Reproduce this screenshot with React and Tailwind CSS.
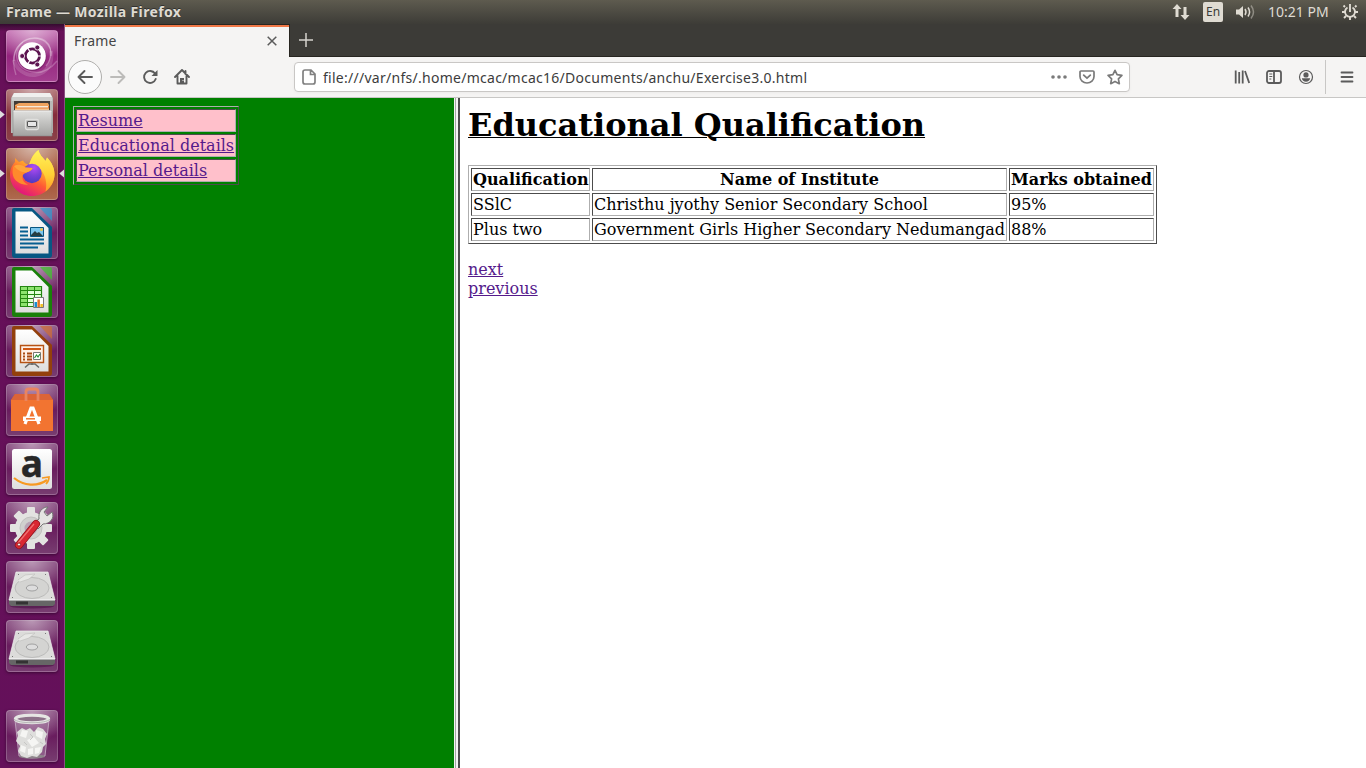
import React from 'react';

const UI = "font-['Noto_Sans','Open_Sans',sans-serif]";

function Tile({ bg, children, label, left, right }) {
  return (
    <div className="relative ml-[6px] h-[52px] w-[52px] shrink-0" aria-label={label}>
      <div className={`h-[52px] w-[52px] rounded-[4px] border border-white/20 bg-linear-to-b shadow-[0_1px_3px_rgba(20,0,20,0.5)] ${bg}`}>
        <svg className="-ml-px -mt-px block h-[52px] w-[52px] overflow-visible" viewBox="0 0 52 52">
          <defs>
            <radialGradient id="shine" cx="50%" cy="0%" r="65%">
              <stop offset="0" stopColor="#fff" stopOpacity=".45" />
              <stop offset="1" stopColor="#fff" stopOpacity="0" />
            </radialGradient>
            <linearGradient id="metal" x1="0" y1="0" x2="0" y2="1">
              <stop offset="0" stopColor="#e0e0de" />
              <stop offset="1" stopColor="#a2a2a0" />
            </linearGradient>
            <linearGradient id="paper" x1="0" y1="0" x2="0" y2="1">
              <stop offset="0" stopColor="#fff" />
              <stop offset="1" stopColor="#dedede" />
            </linearGradient>
          </defs>
          <rect width="52" height="52" rx="4" fill="url(#shine)" />
          {children}
        </svg>
      </div>
      {left && (
        <svg className="absolute -left-[6px] top-[20px] h-[11px] w-[5px]" viewBox="0 0 5 11"><path d="M0 1.5 4.7 5.5 0 9.5Z" fill="#dedede" /></svg>
      )}
      {right && (
        <svg className="absolute left-[53px] top-[20px] h-[11px] w-[5px]" viewBox="0 0 5 11"><path d="M5 1.5 .3 5.5 5 9.5Z" fill="#dedede" /></svg>
      )}
    </div>
  );
}

function Dash() {
  return (
    <>
      <g fill="none" stroke="#fff">
        <path d="M10 45C5 29 7 15 23 9c14-3 23 6 22 17" strokeOpacity=".25" strokeWidth="1.3" />
        <path d="M8 31C8 17 17 7 31 8s18 17 9 28" strokeOpacity=".28" strokeWidth="1.3" />
        <path d="M51 31c-9 11-20 14-31 9C8 34 8 20 17 12" strokeOpacity=".24" strokeWidth="1.3" />
        <path d="M45 21c2 13-4 22-16 24-10 1-19-6-21-15" strokeOpacity=".15" strokeWidth="4" />
      </g>
      <circle cx="26.5" cy="27" r="14" fill="#53134a" opacity=".35" />
      <circle cx="26" cy="26" r="13.8" fill="#fff" />
      <circle cx="26.4" cy="26" r="7.1" fill="none" stroke="#5c1450" strokeWidth="2.8" />
      <g stroke="#fff" strokeWidth="1.2" strokeLinecap="round"><path d="m26.4 26 9 0M26.4 26l-4.6-8M26.4 26l-4.6 8" /></g>
      <circle cx="26.4" cy="26" r="5" fill="#fff" />
      <g fill="#5c1450" stroke="#fff" strokeWidth=".8"><circle cx="16.2" cy="26" r="2.5" /><circle cx="31.3" cy="17.5" r="2.5" /><circle cx="31.3" cy="34.5" r="2.5" /></g>
    </>
  );
}

function Files() {
  return (
    <>
      <path d="M8 4h36l3 5v35H5V9Z" fill="#b9b9b7" />
      <path d="M8 4h36l2 4H6Z" fill="#f0f0ee" />
      <path d="M6 8h40v4H6Z" fill="#cfcfcd" />
      <path d="M8 12h36v10H8Z" fill="#423b37" />
      <path d="M9 16l4-2h29l1 2v6H9Z" fill="#f0a25d" />
      <path d="M9 17h34v5H9Z" fill="#e97f34" />
      <path d="M11 17h31v1.5H11Z" fill="#f7ead9" />
      <path d="M9 19.5h34V21H9Z" fill="#f5c590" />
      <path d="M7 21.5h39v25.5H7Z" fill="url(#metal)" stroke="#8b8b89" strokeWidth=".6" />
      <path d="M7.5 22h38" stroke="#f0f0f0" />
      <rect x="19.5" y="30.5" width="13" height="10" rx="1.7" fill="#b8b8b6" stroke="#e0e0de" strokeWidth="1.3" />
      <rect x="21.5" y="32.5" width="9" height="5" rx=".5" fill="#e7e7e7" stroke="#555" />
    </>
  );
}

function Firefox() {
  return (
    <>
      <defs>
        <linearGradient id="flame" x1=".8" y1=".05" x2=".3" y2=".95">
          <stop stopColor="#fff04c" /><stop offset=".36" stopColor="#ffb52a" /><stop offset=".66" stopColor="#ff5a34" /><stop offset="1" stopColor="#e3197a" />
        </linearGradient>
        <linearGradient id="tail" x1=".5" y1="0" x2=".5" y2="1">
          <stop stopColor="#fff35a" /><stop offset=".6" stopColor="#ffcf35" /><stop offset="1" stopColor="#ff9a2a" />
        </linearGradient>
        <radialGradient id="globe" cx=".6" cy=".2" r=".8"><stop stopColor="#b34cf5" /><stop offset=".5" stopColor="#7a40d8" /><stop offset="1" stopColor="#4d3ac0" /></radialGradient>
      </defs>
      <path d="M32.500 2c1 5 4 7 7 11l1.500-3.500c5 5 7.500 11 7.500 17C48 39 38 48 26 48S4 39 4 27c0-6 2-9.500 5-13V10l4 4 4-1.500c1 2.500 3 3.500 6 4.500 2-6 4-11 9.500-15Z" fill="url(#flame)" />
      <path d="M32.500 2c1 5 4 7 7 11l1.500-3.500c5 5 7.500 11 7.500 17 0 7-4 13-9 17 2-8 0-16-4-21-4-4-9-6-12.500-5.500 2-6 4-11 9.500-15Z" fill="url(#tail)" />
      <circle cx="26" cy="25.500" r="9.700" fill="url(#globe)" />
      <path d="M7 19c4-3 8-2.500 12 .5l7.500.5c-.5 2.500-3.500 3.500-6 4.500-1.500 1-4 1.500-4 4-.5 4 2.500 7 6 8-7 1-14-3-15.500-9-.7-3-.5-6 0-8.500Z" fill="#ff8a2c" />
      <path d="M8 18c4-2 8-1.500 11.500 1.500l7 .5c-.5 2-3.500 3.500-6 4.500-4 0-9-2-12.500-6.500Z" fill="#ffa63a" />
    </>
  );
}

function Office({ color, light, kind }) {
  return (
    <>
      <path d="M6 3Q6 1 8 1h18l20 19v28q0 3-3 3H9q-3 0-3-3Z" fill={color} />
      <path d="M9.500 4.500H26L42.500 21v25.500h-33Z" fill="url(#paper)" />
      <path d="M34 1h10q2 0 2 2v11Z" fill={light} opacity=".7" />
      {kind === 'writer' && (
        <>
          <path d="M14 20.500h8M14 24.500h8M14 28.500h8M14 32.500h24M14 36.500h24M14 40.500h18" stroke="#075f91" strokeWidth="2" />
          <path d="M24.500 20.500h13v9h-13Z" fill="#7cc6ed" stroke="#075580" />
          <path d="m25 28 4-4 2 2 2-1 4 4H25Z" fill="#263d42" /><circle cx="35.500" cy="22.500" r="1.500" fill="#e8c64e" />
        </>
      )}
      {kind === 'calc' && (
        <>
          <path d="M14.500 20.500h21v20h-21Z" fill="#e3ffd9" stroke="#248611" strokeWidth="1.2" />
          <path d="M15 21h20v3H15ZM15 25h6v15h-6Z" fill="#8de36e" />
          <path d="M14 24.500h21M14 28.500h21M14 32.500h21M14 36.500h21M21.500 21v20M28.500 21v20" stroke="#248611" />
          <path d="M27.500 31.500h10v10h-10Z" fill="#fff" stroke="#777" />
          <path d="M28.500 36h2.500v5h-2.500Z" fill="#168ed0" /><path d="M31.400 33.500h2.500V41h-2.500Z" fill="#e66f23" /><path d="M34.400 38h2.500v3h-2.500Z" fill="#f1bd20" />
        </>
      )}
      {kind === 'impress' && (
        <>
          <path d="M14.500 20.500h23v17h-23Z" fill="#fff0e6" stroke="#b65315" strokeWidth="1.4" />
          <path d="M17 24h18" stroke="#cf5815" strokeWidth="2" />
          <path d="M17 28.500h2m2 0h5M17 31.500h2m2 0h5M17 34.500h2m2 0h5" stroke="#a84b13" strokeWidth="1.8" />
          <path d="M27.500 27.500h7v7h-7Z" fill="#fff" stroke="#777" /><path d="m28.500 33 2-3 1.500 2 2-3" stroke="#279239" fill="none" strokeWidth="1.2" />
          <path d="M26 38v2M19 42.500l4-3.500h6l4 3.500" fill="none" stroke="#696969" strokeWidth="1.5" />
        </>
      )}
    </>
  );
}

function Software() {
  return (
    <>
      <path d="M9 10h34l4 6v31H5V16Z" fill="#df5a1d" />
      <path d="M5 16h42v31H5Z" fill="#f27431" />
      <path d="M9 10 5 16h42l-4-6Z" fill="#dc6437" />
      <path d="M20 17V8q0-3 3-3h6q3 0 3 3v9" fill="none" stroke="#e98460" strokeWidth="2.8" />
      <path d="m19 40 6-16h2l6 16" fill="none" stroke="#fff" strokeWidth="3.2" />
      <path d="M17 32.500h18v4.500H17Z" fill="#fff" /><path d="M20 34.800h9" stroke="#f27431" strokeWidth="1.5" />
    </>
  );
}

function Settings() {
  return (
    <>
      <g transform="translate(25 26)">
        <g fill="#e3e3e1">
          <circle r="16" />
          <rect x="-4" y="-21" width="8" height="42" rx="1" />
          <rect x="-4" y="-21" width="8" height="42" rx="1" transform="rotate(45)" />
          <rect x="-4" y="-21" width="8" height="42" rx="1" transform="rotate(90)" />
          <rect x="-4" y="-21" width="8" height="42" rx="1" transform="rotate(135)" />
        </g>
        <circle r="11" fill="#d0d0ce" stroke="#c1c1bf" /><circle r="6.500" fill="#b9a3b5" />
      </g>
      <path d="m29 20 4-3c-1-7 3-12 9-12l-4 5 3 4 5-4c3 6-2 12-9 12l-5 5Z" fill="#e4e4e2" stroke="#777" />
      <path d="M30 22 13 43" stroke="#8e1019" strokeWidth="8" strokeLinecap="round" />
      <path d="M30 22 13 43" stroke="#d92832" strokeWidth="6.600" strokeLinecap="round" />
      <path d="M28 22 12 41" stroke="#f17373" strokeWidth="1.200" />
      <circle cx="13" cy="42.500" r="1.600" fill="#eee" stroke="#9e1e23" />
    </>
  );
}

function Disk() {
  return (
    <>
      <ellipse cx="26" cy="45" rx="22" ry="2.500" fill="#35002f" opacity=".4" />
      <path d="M10 11h32l7 28H3Z" fill="#dcdcda" stroke="#f1f1f1" strokeWidth=".7" />
      <path d="M3 39h46v4l-2 2H5l-2-2Z" fill="#666" /><path d="M3 39h46" stroke="#f6f6f6" strokeWidth="1.200" />
      <path d="M10 40.500h12v3H10Z" fill="#333" />
      <ellipse cx="26" cy="27" rx="17" ry="10.500" fill="#d4d4d2" stroke="#b4b4b2" strokeWidth=".8" />
      <ellipse cx="26" cy="27" rx="5.700" ry="3" fill="#ddd" stroke="#a1a1a1" />
      <path d="m12 19 7-5 10-1-6 5-9 3" fill="#e7e7e5" stroke="#c1c1bf" strokeWidth=".7" />
      <path d="M6 36.500h1m38 0h1M12 13.500h1m26 0h1" stroke="#777" />
    </>
  );
}

function Trash() {
  return (
    <>
      <path d="M9 10h34l-4 36q-13 4-26 0Z" fill="#b596b3" fillOpacity=".4" stroke="#c9b2c8" strokeWidth=".8" />
      <ellipse cx="26" cy="46.500" rx="13" ry="2" fill="#8e858b" />
      <path d="m11 22 5-4 4 2 4-2 4 4 4-5 5 2 4 5-2 5 1 5-3 3-1 5-5 5-5-1-5 2-6-2-3-5 2-5-4-5 2-5Z" fill="#dededc" />
      <g fill="#f5f5f3"><path d="m16 20 6 1-2 7-6-2ZM30 20l7 2-1 7-6-3ZM21 30l7-3 5 6-7 4ZM15 35l5 2-1 6-5-2ZM29 38l6-1-2 6-4 1ZM22 39l5-1v6l-5 1Z" /></g>
      <path d="m24 24 3 3-3 3M18 32l3 3M34 32l3 2" fill="none" stroke="#c6c6c4" strokeWidth="1" />
      <ellipse cx="26" cy="9" rx="16.700" ry="3.700" fill="#8d7189" stroke="#e6e6e4" strokeWidth="3" />
      <path d="M8 9c3 5 33 5 36 0" fill="none" stroke="#aaa" strokeWidth=".8" />
    </>
  );
}

const PLUM = 'from-[#82447a] via-[#691c5e] to-[#773c70]';

function Launcher() {
  return (
    <aside className="flex w-[65px] shrink-0 flex-col gap-[7px] border-r border-[#885080] bg-linear-to-b from-[#350b30] via-[#671058] via-[1%] to-[#64105a] pt-[6px]">
      <Tile label="Search" bg="from-[#c36bb1] via-[#94247e] to-[#a33e8f]"><Dash /></Tile>
      <Tile label="Files" bg="from-[#a66365] via-[#852c3c] to-[#8b4148]" left><Files /></Tile>
      <Tile label="Firefox" bg="from-[#b2765c] via-[#a34d2f] to-[#ae694e]" left right><Firefox /></Tile>
      <Tile label="Writer" bg={PLUM}><Office kind="writer" color="#075783" light="#2e9bd0" /></Tile>
      <Tile label="Calc" bg={PLUM}><Office kind="calc" color="#198009" light="#3cc72b" /></Tile>
      <Tile label="Impress" bg={PLUM}><Office kind="impress" color="#93400c" light="#ce6e32" /></Tile>
      <Tile label="Software" bg={PLUM}><Software /></Tile>
      <Tile label="Amazon" bg={PLUM}>
        <rect x="6" y="6" width="40" height="40" rx="2.500" fill="url(#paper)" />
        <text x="26" y="34" textAnchor="middle" fontFamily="Open Sans, sans-serif" fontWeight="700" fontSize="37" fill="#272727" stroke="#272727" strokeWidth=".5">a</text>
        <path d="M8 35c10 8 23 9 33 2" fill="none" stroke="#f79a22" strokeWidth="2.200" /><path d="m36 35 7-1c0 3-1 5-3 7" fill="none" stroke="#f79a22" strokeWidth="1.700" />
      </Tile>
      <Tile label="Settings" bg={PLUM}><Settings /></Tile>
      <Tile label="Disk" bg={PLUM}><Disk /></Tile>
      <Tile label="Disk" bg={PLUM}><Disk /></Tile>
      <div className="mt-auto pb-[6px]"><Tile label="Trash" bg={PLUM}><Trash /></Tile></div>
    </aside>
  );
}

function Panel() {
  return (
    <header className={`flex h-6 items-center justify-between bg-linear-to-b from-[#5e5b4f] to-[#3d3c37] pl-[6px] pr-[8px] text-[#dfdbd2] ${UI}`}>
      <h1 className="text-[14px] leading-6 font-bold tracking-[0.37px] whitespace-nowrap [text-shadow:0_-1px_#303030]">Frame — Mozilla Firefox</h1>
      <div className="flex h-6 items-center">
        <svg className="h-[16px] w-[18px]" viewBox="0 0 18 16"><path d="M5 0 9.500 5h-3v8h-3V5h-3ZM13 16l4.500-5h-3V3h-3v8h-3Z" fill="#dfdbd2" /></svg>
        <div className="ml-[13px] flex h-[20px] w-[20px] items-center justify-center rounded-[2px] bg-[#dfdbd2] text-[12px] leading-5 text-[#3c3b37]">En</div>
        <svg className="ml-[12px] h-[16px] w-[21px]" viewBox="0 0 21 16"><path d="M1 5.500h3L8 2v12l-4-3.500H1Z" fill="#dfdbd2" /><g fill="none" stroke="#dfdbd2" strokeWidth="1.500"><path d="M10 5q2 3 0 6M13 3.500q3.200 4.500 0 9" /><path d="M16 1.500q5 6.500 0 13" opacity=".45" /></g></svg>
        <span className="ml-[12px] w-[62px] text-[14px] leading-6 whitespace-nowrap">10:21 PM</span>
        <svg className="ml-[12px] h-[16px] w-[16px]" viewBox="0 0 16 16" fill="none" stroke="#dfdbd2"><path d="M5.500 3.500a5 5 0 1 0 5 0" strokeWidth="1.900" /><path d="M8 0v8" strokeWidth="1.900" /><path d="m3 3-1.500-1.500M13 3l1.500-1.500M3 8H0M13 8h3M4 12l-2 2M12 12l2 2M8 13v3" strokeWidth="1.900" /></svg>
      </div>
    </header>
  );
}

function Tabs() {
  return (
    <div className={`flex h-[33px] bg-[#3c3b37] ${UI}`}>
      <div className="flex w-[224px] shrink-0 flex-col border-t border-[#272520] bg-[#f5f4f3]">
        <div className="h-[2px] bg-[#f07746]" />
        <div className="flex h-[30px] items-center justify-between pl-[9px] pr-[12px] text-[14px] text-[#454545]">
          <span className="-mt-[4px] tracking-[0.2px]">Frame</span>
          <svg className="-mt-[2px] h-[10px] w-[10px]" viewBox="0 0 10 10"><path d="m.7.7 8.600 8.600m0-8.600L.7 9.300" stroke="#5b5b5b" strokeWidth="1.500" /></svg>
        </div>
      </div>
      <div className="flex flex-1 items-center border-b border-l border-[#272520] pl-[9px]">
        <svg className="h-[14px] w-[14px]" viewBox="0 0 14 14"><path d="M7 0v14M0 7h14" stroke="#d5d3ce" strokeWidth="1.500" /></svg>
      </div>
    </div>
  );
}

function Toolbar() {
  return (
    <div className={`flex h-[41px] items-center border-b border-[#c8c7c5] bg-[#f5f4f3] ${UI}`}>
      <div className="ml-[3px] flex h-[34px] w-[34px] shrink-0 items-center justify-center rounded-full border border-[#afaeac] bg-[#fbfbfb]">
        <svg className="h-[16px] w-[16px]" viewBox="0 0 16 16"><path d="M15 8H1.500M7.500 2l-6 6 6 6" fill="none" stroke="#5b5b5b" strokeWidth="1.900" strokeLinecap="round" strokeLinejoin="round" /></svg>
      </div>
      <svg className="ml-[8px] h-[16px] w-[16px] shrink-0" viewBox="0 0 16 16"><path d="M1 8h13.500M8.500 2l6 6-6 6" fill="none" stroke="#bcbbb9" strokeWidth="1.900" strokeLinecap="round" strokeLinejoin="round" /></svg>
      <svg className="ml-[16px] h-[16px] w-[16px] shrink-0" viewBox="0 0 16 16"><path d="M13 4.500A6 6 0 1 0 13.700 10" fill="none" stroke="#5b5b5b" strokeWidth="1.900" strokeLinecap="round" /><path d="M15.500 1v6H9.500Z" fill="#5b5b5b" /></svg>
      <svg className="ml-[16px] h-[16px] w-[16px] shrink-0" viewBox="0 0 16 16"><path d="M1 8 8 1l7 7M3.500 7v7.500h9V7M11.500 2v3" fill="none" stroke="#5b5b5b" strokeWidth="1.900" strokeLinecap="round" strokeLinejoin="round" /><path d="M6 14V9h4v5Z" fill="#5b5b5b" /><circle cx="9" cy="11.500" r=".6" fill="#fff" /></svg>
      <div className="ml-[104px] flex h-[30px] w-[836px] shrink-0 items-center rounded-[4px] border border-[#c9c7c5] bg-white pl-[7px] pr-[6px] shadow-[0_1px_3px_rgba(0,0,0,0.04)]">
        <svg className="h-[16px] w-[14px] shrink-0" viewBox="0 0 14 16"><path d="M3 1h6l4 4v8q0 2-2 2H3q-2 0-2-2V3q0-2 2-2ZM8.500 1v4.500H13" fill="none" stroke="#808080" strokeWidth="1.700" /></svg>
        <span className="ml-[7px] text-[14px] tracking-[0.27px] whitespace-nowrap text-[#3c3c3c]">file:///var/nfs/.home/mcac/mcac16/Documents/anchu/Exercise3.0.html</span>
        <div className="ml-auto flex items-center gap-[12px]">
          <svg className="h-[16px] w-[16px]" viewBox="0 0 16 16" fill="#7a7a7a"><circle cx="2" cy="8" r="1.800" /><circle cx="8" cy="8" r="1.800" /><circle cx="14" cy="8" r="1.800" /></svg>
          <svg className="h-[16px] w-[16px]" viewBox="0 0 16 16" fill="none" stroke="#7a7a7a"><path d="M2 2h12q1 0 1 1v4.500a7 6.500 0 0 1-14 0V3q0-1 1-1Z" strokeWidth="1.700" /><path d="m4.700 6.200 3.300 3 3.300-3" strokeWidth="1.800" strokeLinecap="round" strokeLinejoin="round" /></svg>
          <svg className="h-[16px] w-[16px]" viewBox="0 0 16 16"><path d="m8 1.300 2.100 4.400 4.800.7-3.500 3.400.9 4.900L8 12.400l-4.300 2.300.9-4.900L1.100 6.400l4.800-.7Z" fill="none" stroke="#7a7a7a" strokeWidth="1.700" strokeLinejoin="round" /></svg>
        </div>
      </div>
      <div className="ml-auto flex items-center gap-[16px] text-[#5b5b5b]">
        <svg className="h-[16px] w-[16px]" viewBox="0 0 16 16" stroke="currentColor" strokeWidth="1.800"><path d="M1.700 1.500v13M5.200 3v11.500M8.700 1.500v13M11 2l4.200 12" fill="none" /></svg>
        <svg className="h-[16px] w-[16px]" viewBox="0 0 16 16" fill="none" stroke="currentColor"><rect x="1" y="2" width="14" height="12" rx="2" strokeWidth="1.800" /><path d="M8 2v12" strokeWidth="1.800" /><path d="M3.300 5h3M3.300 7.500h3M3.300 10h2" /></svg>
        <svg className="h-[16px] w-[16px]" viewBox="0 0 16 16"><circle cx="8" cy="8" r="6.500" fill="none" stroke="currentColor" strokeWidth="1.200" /><circle cx="8" cy="5.900" r="2.600" fill="currentColor" /><path d="M3.800 9.300h8.400q-.8 3.400-4.200 3.400T3.800 9.300Z" fill="currentColor" /></svg>
      </div>
      <div className="ml-[11px] h-[34px] w-px bg-[#c8c7c5]" />
      <svg className="ml-[14px] mr-[12px] h-[14px] w-[14px]" viewBox="0 0 14 14"><path d="M1.500 2.500h11M1.500 7h11M1.500 11.500h11" stroke="#5b5b5b" strokeWidth="1.800" strokeLinecap="round" /></svg>
    </div>
  );
}

const rows = [
  ['SSlC', 'Christhu jyothy Senior Secondary School', '95%'],
  ['Plus two', 'Government Girls Higher Secondary Nedumangad', '88%'],
];
const TABLE = 'table-fixed border-separate border-spacing-[2px] border border-t-[#aeaeae] border-l-[#aeaeae] border-r-[#4c4c4c] border-b-[#4c4c4c]';
const CELL = 'h-[23px] border border-t-[#4c4c4c] border-l-[#4c4c4c] border-r-[#aeaeae] border-b-[#aeaeae] p-px leading-[19px] whitespace-nowrap';
const LINK = 'text-[#551a8b] underline';

export default function App() {
  return (
    <div className="flex h-[768px] w-[1366px] flex-col overflow-hidden bg-white">
      <Panel />
      <div className="flex min-h-0 flex-1">
        <Launcher />
        <main className="flex min-w-0 flex-1 flex-col">
          <Tabs />
          <Toolbar />
          <div className="flex min-h-0 flex-1 font-['DejaVu_Serif',serif] text-[16px] leading-[19px] text-black">
            <nav className="w-[389px] shrink-0 bg-[#008000] pl-[8px] pt-[8px]">
              <table className={`w-[166px] ${TABLE}`}>
                <tbody>
                  {['Resume', 'Educational details', 'Personal details'].map((t) => (
                    <tr key={t}><td className={`${CELL} bg-[#ffc0cb]`}><a className={LINK}>{t}</a></td></tr>
                  ))}
                </tbody>
              </table>
            </nav>
            <div className="flex w-[6px] shrink-0 border-r-2 border-[#4b4b4b] bg-[#f4f3f2]"><div className="ml-px w-px bg-[#a5a5a5]" /></div>
            <section className="pl-[8px] pt-[8px]">
              <h2 className="h-[38px] text-[32px] leading-[38px] font-bold whitespace-nowrap underline decoration-1">Educational Qualification</h2>
              <table className={`mt-[21px] w-[689px] ${TABLE}`}>
                <colgroup><col className="w-[119px]" /><col className="w-[415px]" /><col className="w-[145px]" /></colgroup>
                <thead>
                  <tr>{['Qualification', 'Name of Institute', 'Marks obtained'].map((t) => <th key={t} className={`${CELL} text-center font-bold`}>{t}</th>)}</tr>
                </thead>
                <tbody>
                  {rows.map((r) => <tr key={r[0]}>{r.map((c) => <td key={c} className={CELL}>{c}</td>)}</tr>)}
                </tbody>
              </table>
              <div className="mt-[16px] flex flex-col items-start"><a className={LINK}>next</a><a className={LINK}>previous</a></div>
            </section>
          </div>
        </main>
      </div>
    </div>
  );
}
